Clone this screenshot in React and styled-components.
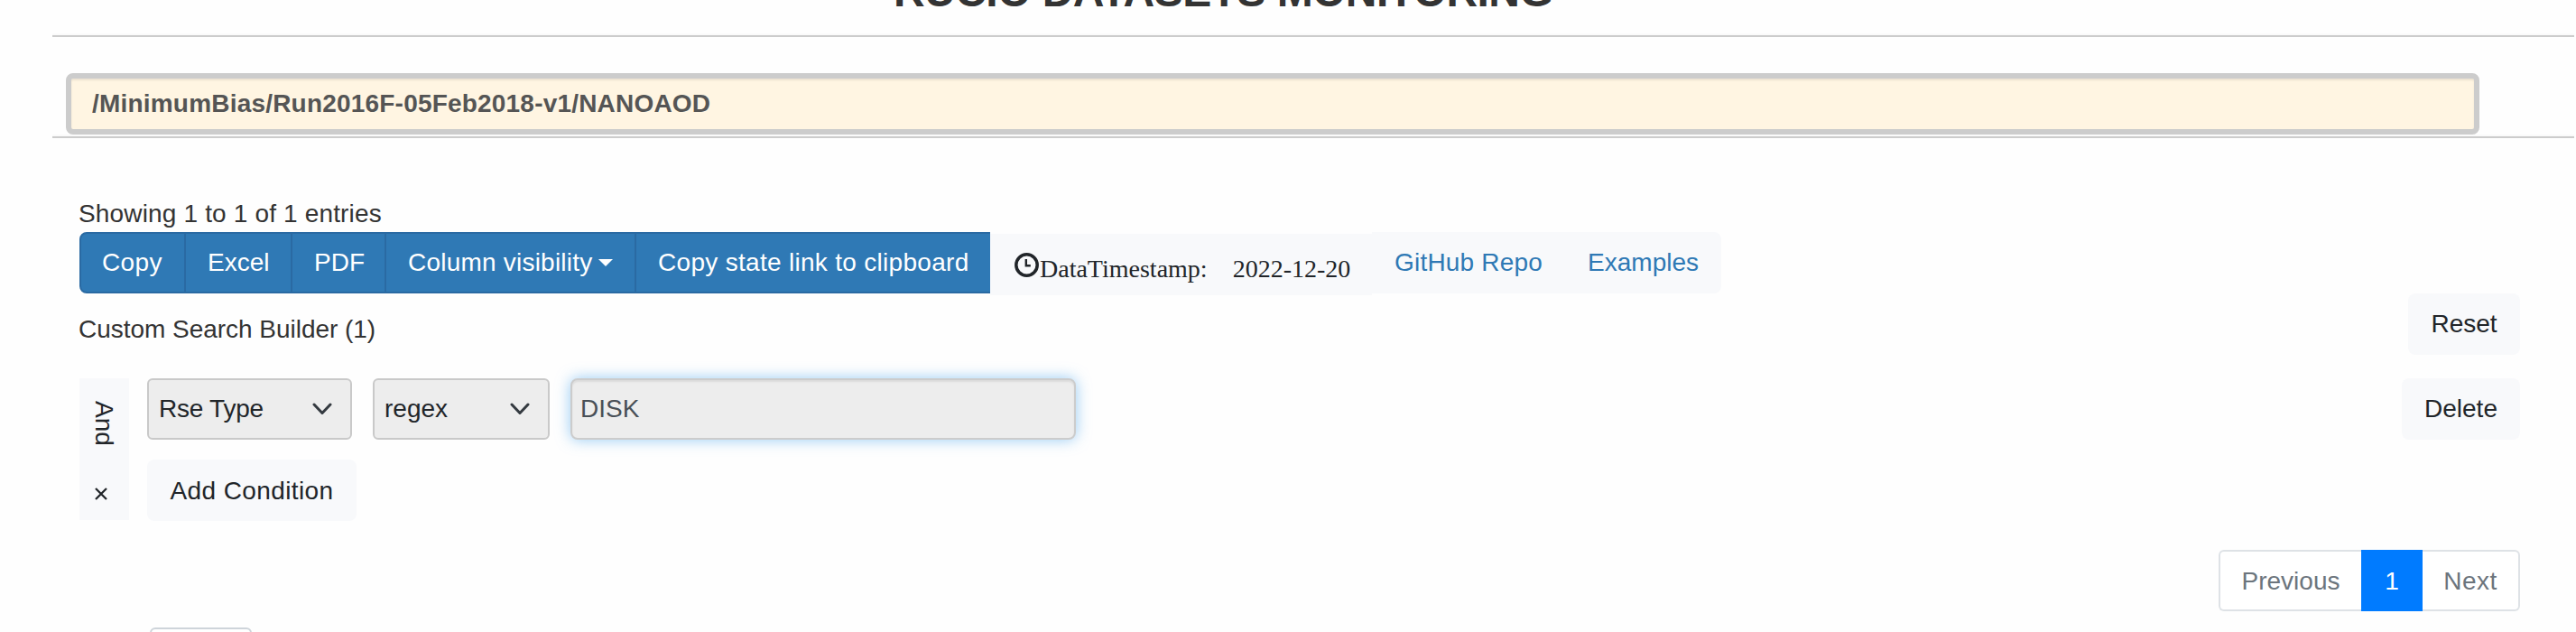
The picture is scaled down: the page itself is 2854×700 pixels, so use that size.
import React from 'react';
import styled, { createGlobalStyle } from 'styled-components';

const GlobalStyle = createGlobalStyle`
  * { box-sizing: border-box; }
  body {
    margin: 0;
    background: #fefefe;
    color: #333;
    font: 28px/40px "Liberation Sans", Arial, sans-serif;
  }
  button, input { font: inherit; margin: 0; }
`;

const Page = styled.div`
  height: 700px;
  overflow: hidden;
  padding: 0 2px 0 58px;
`;

const Header = styled.header`
  height: 37px;
  display: flex;
  align-items: flex-end;
  padding: 0 0 22px 932px;
  overflow: hidden;
`;

const Title = styled.h3`
  margin: 0;
  flex: none;
  font-size: 48px;
  line-height: 48px;
  font-weight: 700;
  letter-spacing: -0.55px;
  white-space: nowrap;
`;

const Rule = styled.hr`
  margin: 0;
  height: 4px;
  border: 0;
  border-top: 2px solid #fafafa;
  border-bottom: 2px solid #ccc;
`;

const DatasetForm = styled.div`
  padding: 40px 105px 0 15px;
`;

const DatasetInput = styled.input`
  display: block;
  width: 100%;
  height: 68px;
  padding: 0 23px;
  border: 6px solid #ccc;
  border-radius: 8px;
  background: #fff5e2;
  box-shadow: inset 0 2px 2px rgba(0, 0, 0, 0.075);
  color: #555;
  font-weight: 700;
  letter-spacing: 0.2px;
  outline: none;
`;

const TableArea = styled.main`
  padding: 64px 60px 0 30px;
`;

const Info = styled.div`
  height: 40px;
  line-height: 40px;
  margin-left: -1px;
  letter-spacing: 0.16px;
`;

const Toolbar = styled.div`
  display: flex;
  height: 68px;
`;

const ToolButton = styled.button`
  width: ${(p) => p.$width}px;
  height: 68px;
  padding: 0 0 0 ${(p) => (p.$first ? 23 : 24)}px;
  border: 2px solid #2a6aa3;
  border-left-width: ${(p) => (p.$first ? 2 : 0)}px;
  border-right-width: ${(p) => (p.$last ? 0 : 2)}px;
  border-radius: ${(p) => (p.$first ? '8px 0 0 8px' : 0)};
  background: #2f79b5;
  color: #fff;
  display: flex;
  align-items: center;
  letter-spacing: ${(p) => p.$tracking || 0}px;
  white-space: nowrap;
`;

const Caret = styled.span`
  margin-left: 7px;
  margin-top: -1px;
  border: 8px solid transparent;
  border-top-color: #fff;
  border-bottom: 0;
`;

const Timestamp = styled.div`
  width: 423px;
  height: 68px;
  margin-top: 2px;
  padding: 10px 0 0 27px;
  background: #f8f9fb;
  color: #212529;
  display: flex;
  align-items: center;
  font-family: "Liberation Serif", "Times New Roman", serif;
  white-space: nowrap;
`;

const ClockIcon = styled.svg`
  width: 27px;
  height: 27px;
  margin: -10px 1px 0 0;
  flex: none;
`;

const DateText = styled.span`
  margin-left: 28px;
`;

const LinkGroup = styled.nav`
  display: flex;
  width: 387px;
  height: 68px;
  align-items: center;
  gap: 50px;
  padding-left: 25px;
  border-radius: 0 8px 8px 0;
  background: #f8f9fb;
`;

const RepoLink = styled.a`
  color: #2f79b5;
  letter-spacing: ${(p) => p.$tracking || 0}px;
`;

const BuilderHeader = styled.div`
  display: flex;
  justify-content: space-between;
  height: 94px;
`;

const BuilderTitle = styled.div`
  margin-left: -1px;
  padding-top: 20px;
  letter-spacing: -0.03px;
`;

const LightButton = styled.button`
  width: ${(p) => p.$width}px;
  height: 68px;
  padding: ${(p) => p.$drop || 0}px 0 0;
  border: 0;
  border-radius: 8px;
  background: #f8f9fb;
  color: #212529;
  letter-spacing: ${(p) => p.$tracking || 0}px;
  white-space: nowrap;
`;

const Group = styled.section`
  display: flex;
  height: 158px;
`;

const Logic = styled.div`
  width: 55px;
  height: 157px;
  margin-right: 20px;
  padding: 25px 0 0;
  background: #f8f9fb;
  color: #212529;
`;

const LogicName = styled.div`
  writing-mode: vertical-rl;
  width: 54px;
  height: 52px;
  line-height: 54px;
`;

const CloseIcon = styled.svg`
  display: block;
  width: 16px;
  height: 16px;
  margin: 43px 0 0 16px;
`;

const Conditions = styled.div`
  flex: 1;
`;

const Condition = styled.div`
  display: flex;
  margin-bottom: 22px;
`;

const Select = styled.div`
  width: ${(p) => p.$width}px;
  height: 68px;
  margin-right: 23px;
  padding: 0 20px 0 11px;
  display: flex;
  align-items: center;
  justify-content: space-between;
  border: 2px solid #c9c9c9;
  border-radius: 6px;
  background: #ededed;
  color: #212529;
  letter-spacing: ${(p) => p.$tracking || 0}px;
`;

const Chevron = styled.svg`
  width: 22px;
  height: 14px;
`;

const ValueInput = styled.input`
  width: 560px;
  height: 68px;
  margin-right: auto;
  padding: 0 9px;
  border: 2px solid #ccc;
  border-radius: 8px;
  background: #ededed;
  color: #495057;
  outline: none;
  box-shadow: inset 0 2px 2px rgba(0, 0, 0, 0.075), 0 0 16px rgba(82, 168, 236, 0.6);
`;

const PaginationRow = styled.div`
  display: flex;
  justify-content: flex-end;
  margin-top: 32px;
`;

const PageButton = styled.button`
  width: ${(p) => p.$width}px;
  height: 68px;
  padding: 1px 0 0;
  border: 2px solid ${(p) => (p.$active ? '#007bff' : '#dee2e6')};
  border-left-width: ${(p) => (p.$edge === 'right' ? 0 : 2)}px;
  border-right-width: ${(p) => (p.$edge === 'left' ? 0 : 2)}px;
  border-radius: ${(p) =>
    p.$edge === 'left' ? '6px 0 0 6px' : p.$edge === 'right' ? '0 6px 6px 0' : 0};
  background: ${(p) => (p.$active ? '#007bff' : '#fff')};
  color: ${(p) => (p.$active ? '#fff' : '#6c757d')};
  letter-spacing: ${(p) => p.$tracking || 0}px;
`;

const LengthSelect = styled.div`
  width: 113px;
  height: 62px;
  margin: 18px 0 0 78px;
  border: 2px solid #ced4da;
  border-radius: 6px;
  background: #fff;
`;

function DownChevron() {
  return (
    <Chevron viewBox="0 0 22 14" fill="none" stroke="#343a40" strokeWidth="3">
      <path d="M2 2l9 9.5L20 2" strokeLinecap="round" strokeLinejoin="round" />
    </Chevron>
  );
}

export default function App() {
  return (
    <>
      <GlobalStyle />
      <Page>
        <Header>
          <Title>RUCIO DATASETS MONITORING</Title>
        </Header>
        <Rule />
        <DatasetForm>
          <DatasetInput readOnly value="/MinimumBias/Run2016F-05Feb2018-v1/NANOAOD" />
        </DatasetForm>
        <Rule />
        <TableArea>
          <Info>Showing 1 to 1 of 1 entries</Info>
          <Toolbar>
            <ToolButton $width={118} $first $tracking={0.4}>Copy</ToolButton>
            <ToolButton $width={118}>Excel</ToolButton>
            <ToolButton $width={104}>PDF</ToolButton>
            <ToolButton $width={277} $tracking={0.22}>
              Column visibility
              <Caret />
            </ToolButton>
            <ToolButton $width={392} $last $tracking={0.3}>Copy state link to clipboard</ToolButton>
            <Timestamp>
              <ClockIcon viewBox="0 0 27 27" fill="none" stroke="#212529">
                <circle cx="13.5" cy="13.5" r="11.7" strokeWidth="3.5" />
                <path d="M12.8 7v7.3h5" strokeWidth="2.4" />
              </ClockIcon>
              <span>DataTimestamp:</span>
              <DateText>2022-12-20</DateText>
            </Timestamp>
            <LinkGroup>
              <RepoLink $tracking={0.2}>GitHub Repo</RepoLink>
              <RepoLink>Examples</RepoLink>
            </LinkGroup>
          </Toolbar>
          <BuilderHeader>
            <BuilderTitle>Custom Search Builder (1)</BuilderTitle>
            <LightButton $width={124}>Reset</LightButton>
          </BuilderHeader>
          <Group>
            <Logic>
              <LogicName>And</LogicName>
              <CloseIcon viewBox="0 0 16 16" stroke="#212529" strokeWidth="2.3">
                <path d="M2 2l12 12M14 2L2 14" />
              </CloseIcon>
            </Logic>
            <Conditions>
              <Condition>
                <Select $width={227} $tracking={-0.25}>
                  Rse Type
                  <DownChevron />
                </Select>
                <Select $width={196}>
                  regex
                  <DownChevron />
                </Select>
                <ValueInput readOnly value="DISK" />
                <LightButton $width={131}>Delete</LightButton>
              </Condition>
              <LightButton $width={232} $tracking={0.4} $drop={1}>Add Condition</LightButton>
            </Conditions>
          </Group>
          <PaginationRow>
            <PageButton $width={158} $edge="left">Previous</PageButton>
            <PageButton $width={68} $active>1</PageButton>
            <PageButton $width={108} $edge="right" $tracking={0.45}>Next</PageButton>
          </PaginationRow>
          <LengthSelect />
        </TableArea>
      </Page>
    </>
  );
}
